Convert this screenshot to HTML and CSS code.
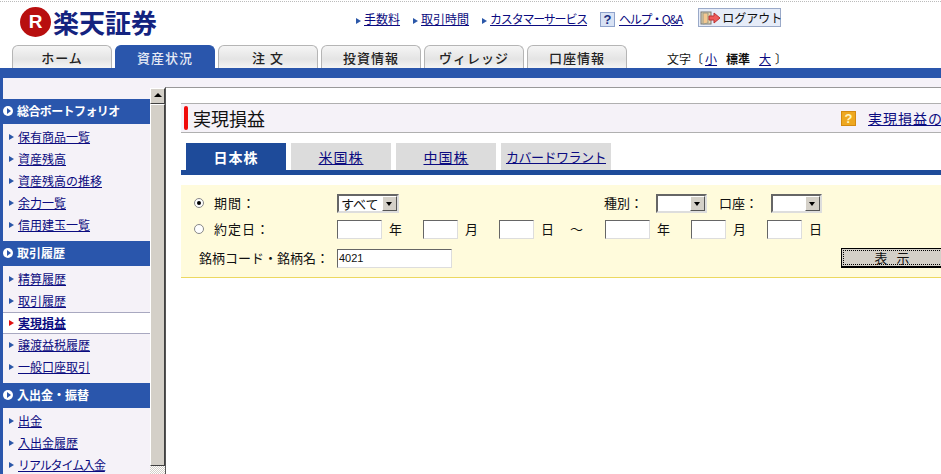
FILE: index.html
```html
<!DOCTYPE html>
<html lang="ja">
<head>
<meta charset="utf-8">
<title>楽天証券</title>
<link rel="stylesheet" href="styles.css">
</head>
<body>
<header class="top">
  <div class="top-row">
    <div class="logo"><span class="logo-r">R</span><span class="logo-t">楽天証券</span></div>
    <nav class="util">
      <a class="u1" href="#"><i class="arr"></i>手数料</a>
      <a class="u2" href="#"><i class="arr"></i>取引時間</a>
      <a class="u3" href="#"><i class="arr"></i><span class="kana-cs">カスタマーサービス</span></a>
      <span class="qmark">?</span><a class="u4" href="#">ヘルプ・Q&amp;A</a>
      <span class="logout">
        <svg class="logout-ic" width="22" height="14" viewBox="0 0 22 14"><rect x="1" y="1" width="10" height="12" fill="#e8d8b0" stroke="#777"/><path d="M3 2v11l5-1V2z" fill="#f4c890" stroke="#998"/><path d="M9 5h5V2l6 5-6 5V9H9z" fill="#ef5a5a" stroke="#b33"/></svg>ログアウト
      </span>
    </nav>
  </div>
  <div class="tabs-row">
    <a class="tab">ホーム</a>
    <a class="tab active">資産状況</a>
    <a class="tab">注 文</a>
    <a class="tab">投資情報</a>
    <a class="tab">ヴィレッジ</a>
    <a class="tab">口座情報</a>
    <div class="fontsize">文字〔<a href="#">小</a><b>標準</b><a href="#">大</a>〕</div>
  </div>
</header>
<div class="navbar"></div>
<div class="body">
  <aside class="side">
    <h3 class="sec first"><span class="tight">総合ポートフォリオ</span></h3>
    <ul>
      <li><a href="#">保有商品一覧</a></li>
      <li><a href="#">資産残高</a></li>
      <li><a href="#">資産残高の推移</a></li>
      <li><a href="#">余力一覧</a></li>
      <li><a href="#">信用建玉一覧</a></li>
    </ul>
    <h3 class="sec">取引履歴</h3>
    <ul>
      <li><a href="#">精算履歴</a></li>
      <li><a href="#">取引履歴</a></li>
      <li class="cur"><a href="#">実現損益</a></li>
      <li><a href="#">譲渡益税履歴</a></li>
      <li><a href="#">一般口座取引</a></li>
    </ul>
    <h3 class="sec">入出金・振替</h3>
    <ul>
      <li><a href="#">出金</a></li>
      <li><a href="#">入出金履歴</a></li>
      <li><a class="tighter" href="#">リアルタイム入金</a></li>
    </ul>
  </aside>
  <div class="sbar">
    <div class="sbtn"><i class="up"></i></div>
    <div class="sthumb"></div>
    <div class="scheck"></div>
  </div>
  <main class="main">
    <div class="title">
      <span class="redbar"></span>
      <h1>実現損益</h1>
      <span class="hq">?</span><a class="hlink" href="#">実現損益の見方</a>
    </div>
    <div class="subtabs">
      <span class="st on">日本株</span>
      <a class="st" href="#">米国株</a>
      <a class="st" href="#">中国株</a>
      <a class="st wide" href="#">カバードワラント</a>
    </div>
    <form class="form">
      <div class="row r1">
        <span class="radio checked"></span><span class="lab">期間：</span>
        <span class="sel s62"><em>すべて</em><i></i></span>
        <span class="lab2 m205">種別：</span>
        <span class="sel s51"><em></em><i></i></span>
        <span class="lab2 m12">口座：</span>
        <span class="sel s51"><em></em><i></i></span>
      </div>
      <div class="row r2">
        <span class="radio"></span><span class="lab">約定日：</span>
        <span class="inp w45"></span><span class="u">年</span>
        <span class="inp w35"></span><span class="u">月</span>
        <span class="inp w35"></span><span class="u">日</span>
        <span class="tilde">～</span>
        <span class="inp w45"></span><span class="u">年</span>
        <span class="inp w35"></span><span class="u">月</span>
        <span class="inp w35"></span><span class="u">日</span>
      </div>
      <div class="row r3">
        <span class="lab3">銘柄コード・銘柄名：</span>
        <span class="inp w115">4021</span>
        <span class="btn"><span>表 示</span></span>
      </div>
    </form>
  </main>
</div>
</body>
</html>
```
FILE: styles.css
```css
* { box-sizing: border-box; }
html, body { margin: 0; height: 474px; overflow: hidden; background: #fff; }
body { width: 941px; font: 12px/14px "Noto Sans CJK JP", "Liberation Sans", sans-serif; color: #111; }
a { color: #0b0b80; text-decoration: underline; }

.top { height: 67px; border-top: 1px dotted #bbb; margin-top: 1px; display: flex; flex-direction: column; }
.top-row { height: 43px; display: flex; }
.logo { width: 356px; padding: 5px 0 0 20px; display: flex; align-items: flex-start; }
.logo-r { width: 31px; height: 30px; border-radius: 50%; background: #b80f0f; color: #fff; font: bold 19px/30px "Liberation Sans", sans-serif; text-align: center; }
.logo-t { font: bold 26px/30px "Noto Sans CJK JP", sans-serif; color: #14237f; margin-left: 2px; }
.util { flex: 1; display: flex; align-items: flex-start; padding-top: 10px; white-space: nowrap; }
.util a { display: block; }
.arr { display: inline-block; border-left: 5px solid #2b57a8; border-top: 3.5px solid transparent; border-bottom: 3.5px solid transparent; margin-right: 3px; }
.u2 { margin-left: 13px; }
.u3 { margin-left: 13px; }
.kana-cs { letter-spacing: -1.2px; }
.qmark { margin-left: 13px; width: 15px; height: 15px; background: #d8e2f4; border: 1px solid #8fa3cc; color: #1a2c80; font: bold 13px/13px "Liberation Sans", sans-serif; text-align: center; margin-right: 4px; }
.u4 { letter-spacing: -1.3px; }
.logout { margin-left: 16px; margin-top: -4px; width: 83px; height: 19px; background: #e6ecf8; border: 1px solid #9aa9c8; display: flex; align-items: center; padding-left: 1px; color: #111; }
.logout-ic { flex: none; }

.tabs-row { height: 23px; display: flex; padding-left: 12px; gap: 3px; }
.tab { width: 100px; height: 23px; border: 1px solid #b5b5b5; border-bottom: 0; border-radius: 6px 6px 0 0; background: linear-gradient(#f5f5f5, #e4e4e4 60%, #f4f4f4); color: #222; text-align: center; font-weight: 500; font-size: 13px; line-height: 23px; letter-spacing: 1px; text-decoration: none; }
.tab.active { background: #2a56ac; border-color: #2a56ac; color: #e6eaf5; }
.fontsize { margin-left: 37px; line-height: 27px; font-size: 12px; white-space: nowrap; }
.fontsize a { margin: 0 4px 0 2px; }
.fontsize b { margin: 0 7px 0 5px; }

.navbar { height: 10px; background: #2a56ac; }
.body { height: 396px; display: flex; background: #f5f2f8; border-left: 3px solid #2a56ac; }
.side { width: 147px; flex: none; padding-top: 21px; overflow: hidden; }
.sec { margin: 0; height: 25px; background: #2a56ac; color: #fff; font-size: 12px; font-weight: 700; line-height: 24px; padding-left: 14px; position: relative; }
.sec::before { content: ""; position: absolute; left: 0; top: 7px; width: 10px; height: 10px; border-radius: 50%; background: #fff; }
.sec::after { content: ""; position: absolute; left: 4px; top: 9px; border-left: 4px solid #2a56ac; border-top: 3px solid transparent; border-bottom: 3px solid transparent; }
.tight { letter-spacing: -0.6px; }
.tighter { letter-spacing: -1.1px; }
.side ul { list-style: none; margin: 0; padding: 2px 0 5px; }
.side li { height: 22px; line-height: 21px; padding-left: 15px; position: relative; white-space: nowrap; }
.side li::before { content: ""; position: absolute; left: 6px; top: 8px; border-left: 5px solid #2b57a8; border-top: 3.5px solid transparent; border-bottom: 3.5px solid transparent; }
.side li.cur { background: #fff; border-top: 1px solid #a8a8c0; border-bottom: 1px solid #a8a8c0; line-height: 19px; font-weight: 700; }
.side li.cur::before { border-left-color: #e01010; top: 7px; }

.sbar { width: 15px; flex: none; padding-top: 10px; display: flex; flex-direction: column; }
.sbtn { height: 16px; width: 15px; background: #d4d0c8; border: 1px solid; border-color: #fff #404040 #404040 #fff; position: relative; }
.sbtn .up { position: absolute; left: 3px; top: 4px; border-bottom: 4px solid #000; border-left: 4px solid transparent; border-right: 4px solid transparent; }
.sthumb { height: 362px; width: 15px; background: #d4d0c8; border: 1px solid; border-color: #fff #404040 #404040 #fff; }
.scheck { flex: 1; width: 15px; background: repeating-conic-gradient(#d4d0c8 0 25%, #fff 0 50%) 0 0 / 2px 2px; }

.main { flex: 1; min-width: 0; overflow: hidden; background: #fff; border-top: 1px solid #999; border-left: 1px solid #555; padding: 15px 0 0 15px; margin-top: 9px; }
.title { width: 800px; height: 30px; background: #f5f2f8; border-top: 1px solid #b0b0b0; border-bottom: 1px solid #b0b0b0; display: flex; align-items: center; padding-left: 3px; white-space: nowrap; }
.redbar { width: 4px; height: 24px; background: #f00a0a; border-radius: 2px; }
.title h1 { margin: 0 0 0 5px; font-size: 18px; font-weight: 400; width: 648px; }
.hq { width: 15px; height: 15px; background: #eea820; border: 1px solid #d48a10; color: #fff6c0; font: bold 13px/13px "Liberation Sans", sans-serif; text-align: center; margin-top: 1px; }
.hlink { margin-left: 12px; font-size: 14px; letter-spacing: 1px; }
.subtabs { display: flex; gap: 5px; margin-top: 10px; padding-left: 5px; height: 32px; border-bottom: 5px solid #1e4b9a; width: 800px; }
.st { width: 100px; height: 27px; background: #dcdcdc; text-align: center; font-size: 14px; letter-spacing: 1px; line-height: 28px; }
.st.on { background: #1e4b9a; color: #fff; font-weight: 700; }
.st.wide { width: 110px; font-size: 13px; letter-spacing: -0.5px; }
.form { margin-top: 10px; width: 800px; height: 93px; background: #fffbdc; border-bottom: 1px solid #ecd860; padding-top: 8px; font-size: 13px; }
.row { display: flex; align-items: center; white-space: nowrap; }
.r1 { height: 20px; padding-left: 13px; }
.r2 { height: 20px; padding-left: 13px; margin-top: 6px; }
.r3 { height: 20px; padding-left: 18px; margin-top: 9px; }
.radio { width: 10px; height: 10px; border-radius: 50%; border: 1px solid #888; background: #fff; position: relative; flex: none; }
.radio.checked::after { content: ""; position: absolute; left: 2px; top: 2px; width: 4px; height: 4px; border-radius: 50%; background: #000; }
.lab { width: 123px; margin-left: 10px; letter-spacing: 1px; }
.lab3 { width: 138px; }
.lab2 { width: 52px; }
.m205 { margin-left: 205px; }
.m12 { margin-left: 12px; }
.sel { display: flex; height: 19px; background: #fff; border: 2px solid; border-color: #666 #ddd #ddd #666; }
.sel em { flex: 1; font-style: normal; padding-left: 2px; line-height: 15px; }
.sel i { width: 15px; background: #d4d0c8; border: 1px solid; border-color: #fff #555 #555 #fff; position: relative; }
.sel i::after { content: ""; position: absolute; left: 3px; top: 5px; border-top: 4px solid #000; border-left: 3.5px solid transparent; border-right: 3.5px solid transparent; }
.s62 { width: 62px; }
.s51 { width: 51px; }
.inp { height: 19px; background: #fff; border: 1px solid; border-color: #666 #ddd #ddd #666; padding-left: 1px; font: 11px/16px "Liberation Sans", sans-serif; }
.w45 { width: 45px; }
.w35 { width: 35px; }
.w115 { width: 115px; }
.u { width: 41px; padding-left: 7px; }
.u:nth-last-of-type(1) { width: 20px; }
.tilde { width: 35px; margin-left: -5px; }
.btn { margin-left: 389px; width: 110px; height: 20px; background: #d4d0c8; border: 1px solid #000; border-width: 1px 2px 2px 1px; padding: 1px; }
.btn span { display: block; height: 15px; border: 1px dotted #000; text-align: center; line-height: 13px; padding-right: 4px; letter-spacing: 3px; }
```
